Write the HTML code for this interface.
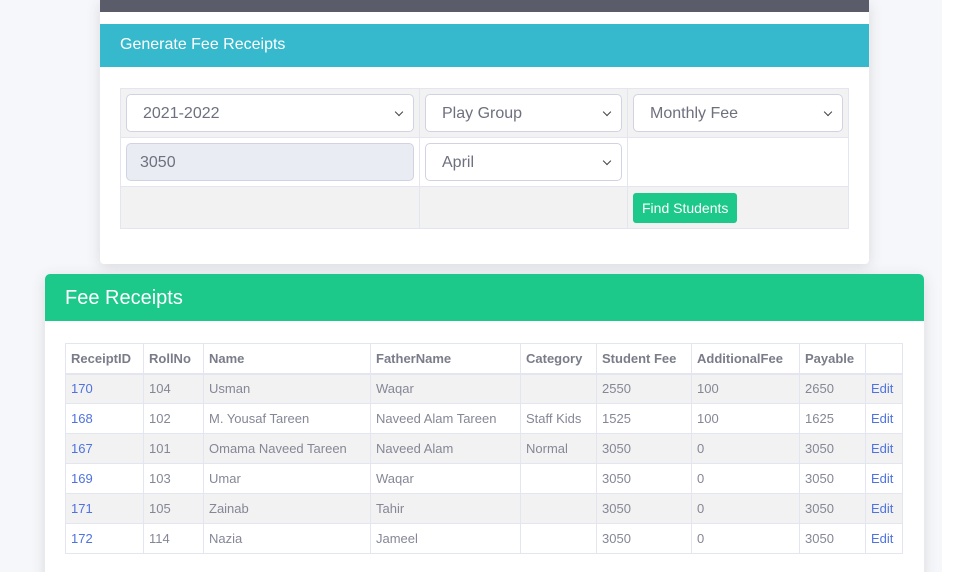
<!DOCTYPE html>
<html><head><style>
*{box-sizing:border-box;margin:0;padding:0}
html,body{width:971px;height:572px;overflow:hidden}
body{background:#fff;font-family:"Liberation Sans",sans-serif;color:#6e707e;position:relative}
.bg{position:absolute;left:0;top:0;width:942px;height:572px;background:#f6f7fa}
.card1{position:absolute;left:100px;top:0;width:769px;height:264px;background:#fff;border-radius:0 0 4px 4px;box-shadow:0 3px 14px rgba(58,59,69,.15)}
.dark{height:12px;background:#5a5c69}
.teal{position:absolute;top:24px;left:0;right:0;height:43px;background:#36b9cc;color:#fff;font-size:16px;padding:12px 20px}
table{border-collapse:collapse;position:absolute}
.t1{left:20px;top:88px;width:729px}
.t1 td{border:1px solid #e3e6f0;padding:5px 5px;vertical-align:middle}
.sel{height:38px;border:1px solid #d1d3e2;border-radius:5px;background:#fff;font-size:16px;color:#6e707e;padding:10px 16px;position:relative}
.sel:after{content:"";position:absolute;right:11px;top:14px;width:5px;height:5px;border-right:1.5px solid #444;border-bottom:1.5px solid #444;transform:rotate(45deg)}
.ro{background:#eaecf4;padding-left:13px}
.ro:after{display:none}
.btn{display:inline-block;background:#1cc88a;color:#fff;font-size:14px;padding:7px 9px;border-radius:3px}
.card2{position:absolute;left:45px;top:274px;width:879px;height:310px;background:#fff;border-radius:5px;box-shadow:0 3px 14px rgba(58,59,69,.15)}
.green{height:47px;background:#1cc88a;color:#fff;font-size:20px;padding:13px 20px;border-radius:5px 5px 0 0}
.t2{left:20px;top:69px;width:838px;font-size:13px}
.t2 td{border:1px solid #e3e6f0;height:30px;padding:0 5px;color:#858796}
.t2 tr.h td{font-weight:bold;color:#7a7c89;height:30px;border-bottom:2px solid #e3e6f0}
.t2 tr:nth-child(even) td{background:#f2f2f2}
.t2 a{color:#4e73df;text-decoration:none}
</style></head><body>
<div class="bg"></div>
<div class="card1">
<div class="dark"></div>
<div class="teal">Generate Fee Receipts</div>
<table class="t1">
<tr style="background:#f2f2f2;height:49px"><td style="width:299px"><div class="sel">2021-2022</div></td><td style="width:208px"><div class="sel">Play Group</div></td><td><div class="sel">Monthly Fee</div></td></tr>
<tr style="height:48px"><td><div class="sel ro">3050</div></td><td><div class="sel">April</div></td><td></td></tr>
<tr style="background:#f2f2f2;height:42px"><td></td><td></td><td><span class="btn">Find Students</span></td></tr>
</table>
</div>
<div class="card2">
<div class="green">Fee Receipts</div>
<table class="t2">
<tr class="h"><td style="width:78px">ReceiptID</td><td style="width:60px">RollNo</td><td style="width:167px">Name</td><td style="width:150px">FatherName</td><td style="width:76px">Category</td><td style="width:95px">Student Fee</td><td style="width:108px">AdditionalFee</td><td style="width:66px">Payable</td><td></td></tr>
<tr><td><a>170</a></td><td>104</td><td>Usman</td><td>Waqar</td><td></td><td>2550</td><td>100</td><td>2650</td><td><a>Edit</a></td></tr>
<tr><td><a>168</a></td><td>102</td><td>M. Yousaf Tareen</td><td>Naveed Alam Tareen</td><td>Staff Kids</td><td>1525</td><td>100</td><td>1625</td><td><a>Edit</a></td></tr>
<tr><td><a>167</a></td><td>101</td><td>Omama Naveed Tareen</td><td>Naveed Alam</td><td>Normal</td><td>3050</td><td>0</td><td>3050</td><td><a>Edit</a></td></tr>
<tr><td><a>169</a></td><td>103</td><td>Umar</td><td>Waqar</td><td></td><td>3050</td><td>0</td><td>3050</td><td><a>Edit</a></td></tr>
<tr><td><a>171</a></td><td>105</td><td>Zainab</td><td>Tahir</td><td></td><td>3050</td><td>0</td><td>3050</td><td><a>Edit</a></td></tr>
<tr><td><a>172</a></td><td>114</td><td>Nazia</td><td>Jameel</td><td></td><td>3050</td><td>0</td><td>3050</td><td><a>Edit</a></td></tr>
</table>
</div>
</body></html>
